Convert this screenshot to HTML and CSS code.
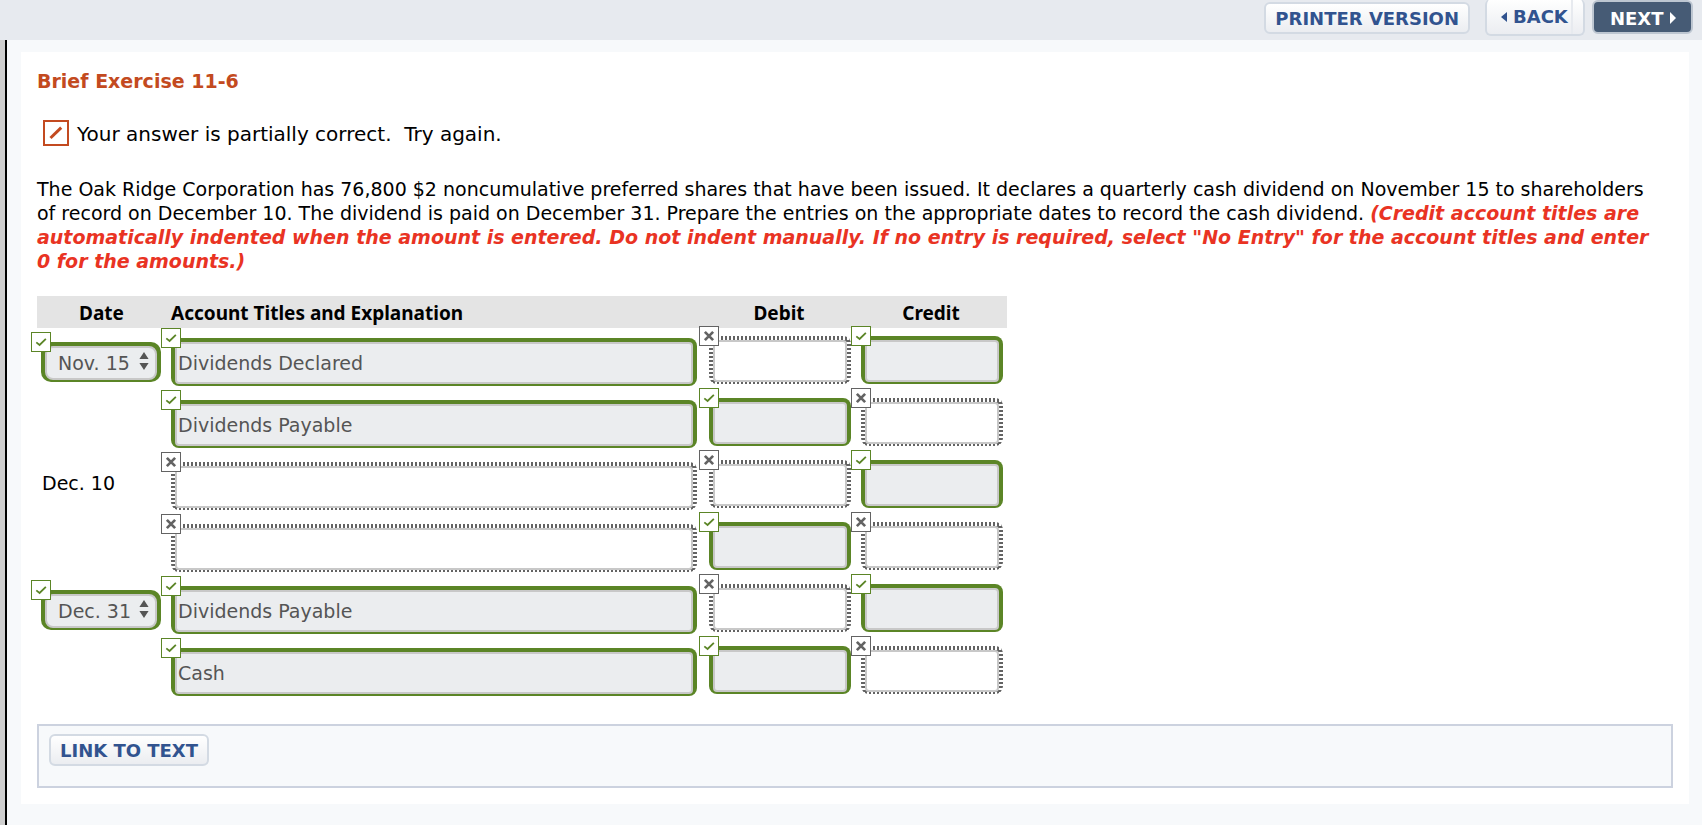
FILE: index.html
```html
<!DOCTYPE html>
<html lang="en">
<head>
    <meta charset="UTF-8">
    <meta name="viewport" content="width=device-width, initial-scale=1.0">
    <title>Brief Exercise 11-6</title>
    <link rel="stylesheet" href="styles.css">
</head>
<body>
    <!-- shared icons -->
    <svg class="sprite" aria-hidden="true">
        <symbol id="check" viewBox="0 0 20 20"><path d="M4.8 10.4 8.4 13.3 15.4 6.5" fill="none" stroke="#5b8526" stroke-width="2"/></symbol>
        <symbol id="cross" viewBox="0 0 20 20"><path d="M5.4 5.4 14.6 14.6M14.6 5.4 5.4 14.6" fill="none" stroke="#636363" stroke-width="3"/></symbol>
        <symbol id="arrows" viewBox="0 0 10 18"><path d="M5 0 9.6 7H.4zM.4 11H9.6L5 18z" fill="#555"/></symbol>
    </svg>

    <header class="topbar">
        <button type="button" class="btn">PRINTER VERSION</button>
        <button type="button" class="btn btn-back">
            <svg width="6" height="10" viewBox="0 0 6 10"><path d="M6 0v10L0 5z" fill="#31538f"/></svg>
            BACK
        </button>
        <button type="button" class="btn btn-next">
            NEXT
            <svg width="6" height="12" viewBox="0 0 6 12"><path d="M0 0v12l6-6z" fill="#fff"/></svg>
        </button>
    </header>

    <div class="page">
        <main class="content">
            <h1>Brief Exercise 11-6</h1>

            <p class="status">
                <svg width="26" height="26" viewBox="0 0 26 26"><rect x="1" y="1" width="24" height="24" fill="#fff" stroke="#c34a20" stroke-width="2"/><path d="M7.5 18 18.2 7.6" stroke="#c34a20" stroke-width="3"/></svg>
                <span>Your answer is partially correct.&nbsp; Try again.</span>
            </p>

            <p class="question">The Oak Ridge Corporation has 76,800 $2 noncumulative preferred shares that have been issued. It declares a quarterly cash dividend on November 15 to shareholders of record on December 10. The dividend is paid on December 31. Prepare the entries on the appropriate dates to record the cash dividend. <strong>(Credit account titles are automatically indented when the amount is entered. Do not indent manually. If no entry is required, select "No Entry" for the account titles and enter 0 for the amounts.)</strong></p>

            <table class="journal">
                <thead>
                    <tr>
                        <th class="date">Date</th>
                        <th class="account">Account Titles and Explanation</th>
                        <th class="amount">Debit</th>
                        <th class="amount">Credit</th>
                    </tr>
                </thead>
                <tbody>
                    <tr>
                        <td class="date"><div class="field right"><select aria-label="Date of first entry"><option>Nov. 15</option></select><svg class="arrows"><use href="#arrows"/></svg><svg class="badge"><use href="#check"/></svg></div></td>
                        <td class="account"><div class="field right"><input type="text" aria-label="Account 1" value="Dividends Declared"><svg class="badge"><use href="#check"/></svg></div></td>
                        <td class="amount"><div class="field wrong"><input type="text" aria-label="Debit 1"><svg class="badge"><use href="#cross"/></svg></div></td>
                        <td class="amount"><div class="field right"><input type="text" aria-label="Credit 1"><svg class="badge"><use href="#check"/></svg></div></td>
                    </tr>
                    <tr>
                        <td class="date"></td>
                        <td class="account"><div class="field right"><input type="text" aria-label="Account 2" value="Dividends Payable"><svg class="badge"><use href="#check"/></svg></div></td>
                        <td class="amount"><div class="field right"><input type="text" aria-label="Debit 2"><svg class="badge"><use href="#check"/></svg></div></td>
                        <td class="amount"><div class="field wrong"><input type="text" aria-label="Credit 2"><svg class="badge"><use href="#cross"/></svg></div></td>
                    </tr>
                    <tr>
                        <td class="date">Dec. 10</td>
                        <td class="account"><div class="field wrong"><input type="text" aria-label="Account 3"><svg class="badge"><use href="#cross"/></svg></div></td>
                        <td class="amount"><div class="field wrong"><input type="text" aria-label="Debit 3"><svg class="badge"><use href="#cross"/></svg></div></td>
                        <td class="amount"><div class="field right"><input type="text" aria-label="Credit 3"><svg class="badge"><use href="#check"/></svg></div></td>
                    </tr>
                    <tr>
                        <td class="date"></td>
                        <td class="account"><div class="field wrong"><input type="text" aria-label="Account 4"><svg class="badge"><use href="#cross"/></svg></div></td>
                        <td class="amount"><div class="field right"><input type="text" aria-label="Debit 4"><svg class="badge"><use href="#check"/></svg></div></td>
                        <td class="amount"><div class="field wrong"><input type="text" aria-label="Credit 4"><svg class="badge"><use href="#cross"/></svg></div></td>
                    </tr>
                    <tr>
                        <td class="date"><div class="field right"><select aria-label="Date of last entry"><option>Dec. 31</option></select><svg class="arrows"><use href="#arrows"/></svg><svg class="badge"><use href="#check"/></svg></div></td>
                        <td class="account"><div class="field right"><input type="text" aria-label="Account 5" value="Dividends Payable"><svg class="badge"><use href="#check"/></svg></div></td>
                        <td class="amount"><div class="field wrong"><input type="text" aria-label="Debit 5"><svg class="badge"><use href="#cross"/></svg></div></td>
                        <td class="amount"><div class="field right"><input type="text" aria-label="Credit 5"><svg class="badge"><use href="#check"/></svg></div></td>
                    </tr>
                    <tr>
                        <td class="date"></td>
                        <td class="account"><div class="field right"><input type="text" aria-label="Account 6" value="Cash"><svg class="badge"><use href="#check"/></svg></div></td>
                        <td class="amount"><div class="field right"><input type="text" aria-label="Debit 6"><svg class="badge"><use href="#check"/></svg></div></td>
                        <td class="amount"><div class="field wrong"><input type="text" aria-label="Credit 6"><svg class="badge"><use href="#cross"/></svg></div></td>
                    </tr>
                </tbody>
            </table>

            <div class="links">
                <button type="button" class="btn">LINK TO TEXT</button>
            </div>
        </main>
    </div>
</body>
</html>
```
FILE: styles.css
```css
:root {
    --green: #5b8526;
    --gray: #636363;
    --blue: #31538f;
    --orange: #c34a20;
}

* {
    box-sizing: border-box;
}

body {
    margin: 0;
    min-height: 100vh;
    display: flex;
    flex-direction: column;
    font-family: Verdana, "DejaVu Sans", sans-serif;
    font-size: 19px;
    line-height: 24px;
    color: #000;
    background: #f7f9fb;
}

.sprite {
    display: none;
}

/* top bar */
.topbar {
    height: 40px;
    display: flex;
    justify-content: flex-end;
    align-items: flex-start;
    padding: 2px 9px 0 0;
    background: #e7eaef;
}

.btn {
    height: 32px;
    padding: 0 9px;
    border: 2px solid #d3dae3;
    border-radius: 6px;
    background: linear-gradient(#fff, #ebedf1);
    color: var(--blue);
    font-family: Verdana, "DejaVu Sans", sans-serif;
    font-size: 18px;
    font-weight: bold;
    white-space: nowrap;
    cursor: pointer;
}

.btn-back {
    display: flex;
    align-items: center;
    gap: 6px;
    height: 37px;
    width: 100px;
    margin: -3px 7px 0 15px;
    padding: 0 0 0 14px;
    border-top: 0;
    background: linear-gradient(#e7eaef, #e7eaef) 86px 0 / 2px 100% no-repeat border-box,
                linear-gradient(#fff, #ebedf1);
}

.btn-next {
    display: flex;
    align-items: center;
    gap: 6px;
    height: 34px;
    width: 101px;
    margin-top: -2px;
    padding: 2px 0 0 16px;
    border-color: #bdc6d1;
    background: #465b75;
    color: #fff;
}

/* page */
.page {
    flex: 1;
    padding: 12px 13px 21px 14px;
    border-left: 2px solid #000;
    margin-left: 5px;
    box-shadow: -5px 0 0 #cfcfcf;
}

.content {
    padding: 17px 16px 16px;
    background: #fff;
}

h1 {
    margin: 0;
    font-size: 19px;
    line-height: 24px;
    color: var(--orange);
}

.status {
    display: flex;
    align-items: center;
    gap: 8px;
    margin: 27px 0 31px 6px;
    font-size: 20px;
}

.status span {
    padding-top: 2px;
}

.question {
    margin: 0 0 23px;
    padding-right: 14px;
}

.question strong {
    color: #e93323;
    font-style: italic;
}

/* journal entries */
.journal {
    width: 970px;
    table-layout: fixed;
    border-collapse: collapse;
}

.journal th {
    height: 32px;
    padding: 2px 5px 0;
    background: #e4e4e4;
    font-family: Tahoma, "Noto Sans", sans-serif;
    font-size: 19px;
    text-align: center;
}

.journal th.date {
    width: 129px;
}

.journal th.account {
    text-align: left;
}

.journal th.amount {
    width: 152px;
}

.journal td {
    height: 62px;
    padding: 0 5px;
    vertical-align: top;
}

.journal td.date {
    vertical-align: middle;
}

.journal td.account {
    padding: 10px 6px 0 5px;
}

.journal td.amount {
    padding: 8px 4px 0 6px;
}

.field {
    position: relative;
    height: 48px;
    padding: 4px 4px 2px;
    border-radius: 8px;
}

.date .field {
    width: 120px;
    height: 40px;
    margin: 6px 0 0 -1px;
    border-radius: 10px;
}

.field.right {
    background: var(--green);
}

.field.wrong {
    background:
        repeating-linear-gradient(90deg, var(--gray) 0 2px, #fff 2px 4px) 0 0 / 100% 4px no-repeat,
        repeating-linear-gradient(90deg, var(--gray) 0 2px, #fff 2px 4px) 0 100% / 100% 2px no-repeat,
        repeating-linear-gradient(var(--gray) 0 2px, #fff 2px 4px);
}

.field input,
.field select {
    display: block;
    width: 100%;
    height: 100%;
    margin: 0;
    padding: 0 1px;
    border: 2px solid #c8c8c8;
    border-radius: 4px;
    background: #fff;
    color: #555;
    font-family: Verdana, "DejaVu Sans", sans-serif;
    font-size: 19px;
}

.field select {
    appearance: none;
    padding: 0 11px;
    border-radius: 8px;
}

.field.right input,
.field.right select {
    background: #ebedef;
}

.badge {
    position: absolute;
    top: -10px;
    left: -10px;
    width: 20px;
    height: 20px;
    border: 1px solid var(--green);
    background: #fff;
}

.wrong .badge {
    border-color: var(--gray);
}

.arrows {
    position: absolute;
    top: 10px;
    right: 12px;
    width: 10px;
    height: 18px;
    pointer-events: none;
}

/* links */
.links {
    margin-top: 24px;
    padding: 8px 10px 20px;
    border: 2px solid #ccd2df;
    background: #f7f9fb;
}

.links .btn {
    display: block;
}
```
